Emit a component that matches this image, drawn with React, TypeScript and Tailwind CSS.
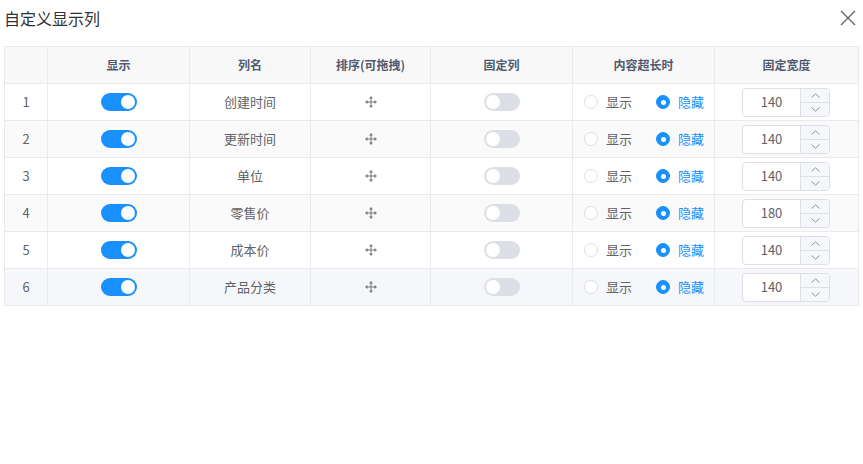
import { useState } from "react"

interface ColumnRow {
  id: number
  name: string
  visible: boolean
  fixed: boolean
  overflow: "show" | "hide"
  width: number
}

const initialRows: ColumnRow[] = [
  { id: 1, name: "创建时间", visible: true, fixed: false, overflow: "hide", width: 140 },
  { id: 2, name: "更新时间", visible: true, fixed: false, overflow: "hide", width: 140 },
  { id: 3, name: "单位", visible: true, fixed: false, overflow: "hide", width: 140 },
  { id: 4, name: "零售价", visible: true, fixed: false, overflow: "hide", width: 180 },
  { id: 5, name: "成本价", visible: true, fixed: false, overflow: "hide", width: 140 },
  { id: 6, name: "产品分类", visible: true, fixed: false, overflow: "hide", width: 140 },
]

function Switch({ on, onClick }: { on: boolean; onClick: () => void }) {
  return (
    <button
      onClick={onClick}
      className={`relative inline-flex h-[18px] w-[36px] items-center rounded-full transition-colors ${
        on ? "bg-[#1890ff]" : "bg-[#dcdfe6]"
      }`}
    >
      <span
        className={`absolute top-[2px] h-[14px] w-[14px] rounded-full bg-white transition-all ${
          on ? "left-[20px]" : "left-[2px]"
        }`}
      />
    </button>
  )
}

function Radio({ checked, label, onClick }: { checked: boolean; label: string; onClick: () => void }) {
  return (
    <label onClick={onClick} className="flex cursor-pointer items-center gap-[8px]">
      <span
        className={`flex h-[14px] w-[14px] items-center justify-center rounded-full border ${
          checked ? "border-[#1890ff] bg-[#1890ff]" : "border-[#dcdfe6] bg-white"
        }`}
      >
        {checked && <span className="h-[5px] w-[5px] rounded-full bg-white" />}
      </span>
      <span className={`text-[13px] ${checked ? "text-[#1890ff]" : "text-[#606266]"}`}>{label}</span>
    </label>
  )
}

function DragIcon() {
  return (
    <svg width="12" height="12" viewBox="0 0 12 12" fill="none" className="text-[#777]">
      <path d="M6 1.5v9M1.5 6h9" stroke="currentColor" strokeWidth="1" />
      <path d="M6 0L4 2.5h4z M6 12L4 9.5h4z M0 6L2.5 4v4z M12 6L9.5 4v4z" fill="currentColor" />
    </svg>
  )
}

function NumberInput({ value, onChange }: { value: number; onChange: (v: number) => void }) {
  return (
    <div className="flex h-[29px] w-[88px] overflow-hidden rounded-[4px] border border-[#dcdfe6] bg-white">
      <div className="flex flex-1 items-center justify-center text-[13px] text-[#606266]">{value}</div>
      <div className="flex w-[29px] flex-col border-l border-[#dcdfe6] bg-[#f5f7fa] text-[#909399]">
        <button
          onClick={() => onChange(value + 1)}
          className="flex flex-1 items-center justify-center border-b border-[#dcdfe6]"
        >
          <svg width="9" height="5" viewBox="0 0 9 5" fill="none">
            <path d="M0.5 4.5L4.5 0.8l4 3.7" stroke="currentColor" strokeWidth="1" />
          </svg>
        </button>
        <button onClick={() => onChange(value - 1)} className="flex flex-1 items-center justify-center">
          <svg width="9" height="5" viewBox="0 0 9 5" fill="none">
            <path d="M0.5 0.5L4.5 4.2l4-3.7" stroke="currentColor" strokeWidth="1" />
          </svg>
        </button>
      </div>
    </div>
  )
}

export default function App() {
  const [rows, setRows] = useState<ColumnRow[]>(initialRows)

  const update = (id: number, patch: Partial<ColumnRow>) => {
    setRows((prev) => prev.map((r) => (r.id === id ? { ...r, ...patch } : r)))
  }

  const headers = ["", "显示", "列名", "排序(可拖拽)", "固定列", "内容超长时", "固定宽度"]
  const widths = ["w-[43px]", "w-[142px]", "w-[121px]", "w-[120px]", "w-[142px]", "w-[142px]", "w-[144px]"]

  return (
    <div
      className="h-[464px] w-[863px] bg-white"
      style={{ fontFamily: '"Noto Sans CJK SC", "Noto Sans", sans-serif' }}
    >
      {/* Header */}
      <div className="flex h-[35px] items-center justify-between pl-[4px] pr-[7px]">
        <h2 className="text-[16px] leading-none text-[#303133]">自定义显示列</h2>
        <button className="text-[#606266]">
          <svg width="16" height="16" viewBox="0 0 16 16" fill="none">
            <path d="M1 1l14 14M15 1L1 15" stroke="currentColor" strokeWidth="1.3" />
          </svg>
        </button>
      </div>

      {/* Table */}
      <div className="mt-[11px] pl-[4px]">
        <table className="table-fixed border-collapse border border-[#e8eaec] text-center">
          <thead>
            <tr className="h-[37px] bg-[#f8f8f9]">
              {headers.map((h, i) => (
                <th
                  key={i}
                  className={`${widths[i]} border border-[#e8eaec] p-0 text-[12px] font-bold text-[#515a6e]`}
                >
                  {h}
                </th>
              ))}
            </tr>
          </thead>
          <tbody>
            {rows.map((row, index) => (
              <tr
                key={row.id}
                className={`h-[37px] ${
                  index === 5 ? "bg-[#f5f7fa]" : index % 2 === 1 ? "bg-[#fafafa]" : "bg-white"
                }`}
              >
                <td className="border border-[#e8eaec] p-0 text-[13px] text-[#606266]">{row.id}</td>
                <td className="border border-[#e8eaec] p-0">
                  <div className="flex items-center justify-center">
                    <Switch on={row.visible} onClick={() => update(row.id, { visible: !row.visible })} />
                  </div>
                </td>
                <td className="border border-[#e8eaec] p-0 text-[13px] text-[#606266]">{row.name}</td>
                <td className="border border-[#e8eaec] p-0">
                  <div className="flex items-center justify-center">
                    <DragIcon />
                  </div>
                </td>
                <td className="border border-[#e8eaec] p-0">
                  <div className="flex items-center justify-center">
                    <Switch on={row.fixed} onClick={() => update(row.id, { fixed: !row.fixed })} />
                  </div>
                </td>
                <td className="border border-[#e8eaec] p-0">
                  <div className="flex items-center gap-[24px] pl-[11px]">
                    <Radio
                      checked={row.overflow === "show"}
                      label="显示"
                      onClick={() => update(row.id, { overflow: "show" })}
                    />
                    <Radio
                      checked={row.overflow === "hide"}
                      label="隐藏"
                      onClick={() => update(row.id, { overflow: "hide" })}
                    />
                  </div>
                </td>
                <td className="border border-[#e8eaec] p-0">
                  <div className="flex items-center pl-[27px]">
                    <NumberInput value={row.width} onChange={(v) => update(row.id, { width: v })} />
                  </div>
                </td>
              </tr>
            ))}
          </tbody>
        </table>
      </div>
    </div>
  )
}
